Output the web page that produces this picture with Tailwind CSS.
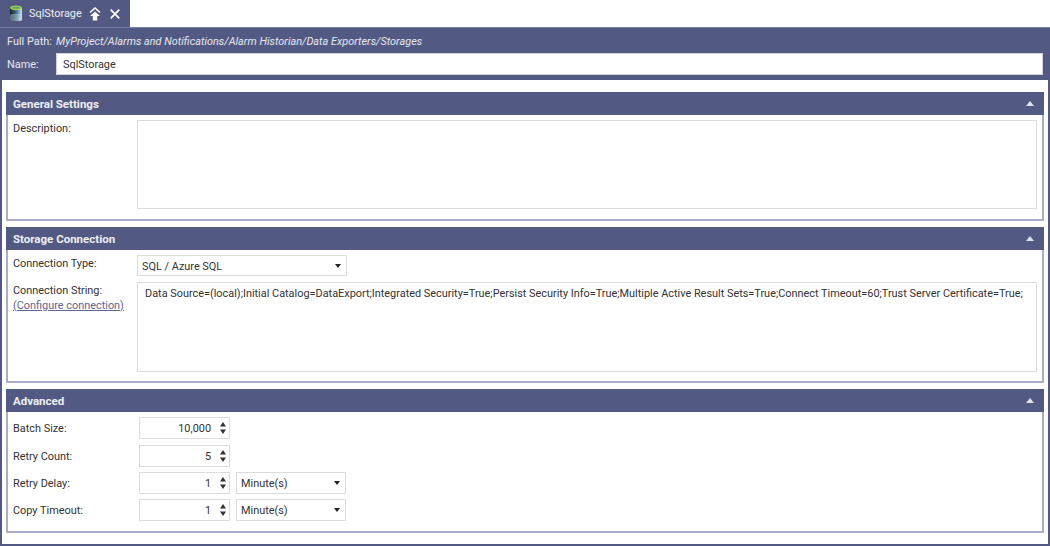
<!DOCTYPE html>
<html><head><script src="https://cdn.jsdelivr.net/npm/@tailwindcss/browser@4"></script></head>
<body class="bg-white">
<div class="w-[1050px] h-[546px] overflow-hidden flex flex-col bg-white font-['Roboto',sans-serif] text-[10.9px] leading-[16px] text-[#333]">
  <div class="h-[27px] shrink-0 flex">
    <div class="w-[130px] bg-[#525a84] flex items-center text-white">
      <svg class="ml-[9px] w-[14px] h-[17px]" viewBox="0 0 14 17"><defs><linearGradient id="c" x1="0" x2="1" y1="0" y2="0"><stop offset="0" stop-color="#16242e"/><stop offset=".5" stop-color="#3c6a84"/><stop offset="1" stop-color="#cfe2ee"/></linearGradient></defs><rect x="1" y="2" width="12" height="14" rx="2" fill="url(#c)"/><rect x="1" y="9" width="12" height="7" rx="2" fill="#e6eef4" opacity=".35"/><ellipse cx="7" cy="2.8" rx="6" ry="2.3" fill="#a9d23c"/><ellipse cx="7" cy="2.8" rx="3.8" ry="1" fill="#5f9a8a"/></svg>
      <span class="ml-[6px] w-[52px] text-[#eef0f6] whitespace-nowrap">SqlStorage</span>
      <svg class="ml-[8px] w-[12px] h-[14px]" viewBox="0 0 12 14"><path d="M1 5.5L6 1L11 5.5" fill="none" stroke="#fff" stroke-width="1.5"/><path d="M6 4.5L11 9H8.2V13.5H3.8V9H1Z" fill="#fff"/></svg>
      <svg class="ml-[9px] w-[10px] h-[10px]" viewBox="0 0 10 10"><path d="M.7 .7L9.3 9.3M9.3 .7L.7 9.3" stroke="#fff" stroke-width="1.7"/></svg>
    </div>
    <div class="flex-1"></div>
  </div>
  <div class="h-[53px] shrink-0 bg-[#525a84] border-t border-[#7a80a3] text-[#e6e8f0] pl-[7px] flex flex-col">
    <div class="h-[25px] flex items-end pb-[3px]"><span class="w-[49px]">Full Path:</span><span class="italic">MyProject/Alarms and Notifications/Alarm Historian/Data Exporters/Storages</span></div>
    <div class="flex items-center h-[22px]"><span class="w-[49px] pt-[2px]">Name:</span><div class="w-[987px] h-[22px] bg-white border border-[#d0d0d0] text-[#333] pl-[6px] pt-[2px] flex items-center">SqlStorage</div></div>
  </div>
  <div class="flex-1 border-l-2 border-r-2 border-b-2 border-[#525a84] pl-[4px] pr-[4px] pt-[12px] flex flex-col">
    <section class="h-[129px] border-x-2 border-b-2 border-[#a9adc6] flex flex-col">
      <div class="h-[23px] -mx-[2px] bg-[#525a84] flex items-center justify-between pl-[7px] pr-[10px] text-[#eef0f6] text-[11.5px] font-bold"><span>General Settings</span><svg class="w-[8px] h-[5px]" viewBox="0 0 8 5"><path d="M4 0L8 5H0Z" fill="#dfe2ee"/></svg></div>
      <div class="flex-1 flex pl-[5px] pr-[5px] pt-[5px] pb-[10px]"><span class="w-[124px] shrink-0 pt-[1px]">Description:</span><div class="flex-1 border border-[#dcdcdc]"></div></div>
    </section>
    <section class="mt-[6px] h-[156px] border-x-2 border-b-2 border-[#a9adc6] flex flex-col">
      <div class="h-[23px] -mx-[2px] bg-[#525a84] flex items-center justify-between pl-[7px] pr-[10px] text-[#eef0f6] text-[11.5px] font-bold"><span>Storage Connection</span><svg class="w-[8px] h-[5px]" viewBox="0 0 8 5"><path d="M4 0L8 5H0Z" fill="#dfe2ee"/></svg></div>
      <div class="flex-1 flex flex-col pl-[5px] pr-[5px] pt-[5px] pb-[9px] gap-[6px]">
        <div class="flex"><span class="w-[124px] shrink-0 pt-[1px]">Connection Type:</span><div class="w-[210px] h-[21px] border border-[#dcdcdc] flex items-center justify-between pl-[4px] pr-[5px]"><span class="pt-[2px]">SQL / Azure SQL</span><svg class="w-[6px] h-[4px]" viewBox="0 0 6 4"><path d="M0 0H6L3 4Z" fill="#222"/></svg></div></div>
        <div class="flex flex-1"><div class="w-[124px] shrink-0 flex flex-col pt-[1px]"><span>Connection String:</span><span class="text-[#5f6690] underline -mt-[1px]">(Configure connection)</span></div><div class="flex-1 border border-[#dcdcdc] pl-[7px] pt-[3px] whitespace-nowrap overflow-hidden">Data Source=(local);Initial Catalog=DataExport;Integrated Security=True;Persist Security Info=True;Multiple Active Result Sets=True;Connect Timeout=60;Trust Server Certificate=True;</div></div>
      </div>
    </section>
    <section class="mt-[6px] h-[144px] border-x-2 border-b-2 border-[#a9adc6] flex flex-col">
      <div class="h-[23px] -mx-[2px] bg-[#525a84] flex items-center justify-between pl-[7px] pr-[10px] text-[#eef0f6] text-[11.5px] font-bold"><span>Advanced</span><svg class="w-[8px] h-[5px]" viewBox="0 0 8 5"><path d="M4 0L8 5H0Z" fill="#dfe2ee"/></svg></div>
      <div class="flex flex-col pl-[5px] pt-[5px]">
        <div class="flex items-center h-[22px]"><span class="w-[126px] shrink-0 pt-[2px]">Batch Size:</span><div class="w-[91px] h-[22px] border border-[#dcdcdc] flex items-center justify-end pr-[3px] gap-[9px]"><span class="pt-[2px]">10,000</span><svg class="w-[6px] h-[12px]" viewBox="0 0 6 12"><path d="M3 0L6 4.5H0Z M0 7.5H6L3 12Z" fill="#333"/></svg></div></div>
        <div class="mt-[6px] flex items-center h-[22px]"><span class="w-[126px] shrink-0 pt-[2px]">Retry Count:</span><div class="w-[91px] h-[22px] border border-[#dcdcdc] flex items-center justify-end pr-[3px] gap-[9px]"><span class="pt-[2px]">5</span><svg class="w-[6px] h-[12px]" viewBox="0 0 6 12"><path d="M3 0L6 4.5H0Z M0 7.5H6L3 12Z" fill="#333"/></svg></div></div>
        <div class="mt-[5px] flex items-center h-[22px]"><span class="w-[126px] shrink-0 pt-[2px]">Retry Delay:</span><div class="w-[91px] h-[22px] border border-[#dcdcdc] flex items-center justify-end pr-[3px] gap-[9px]"><span class="pt-[2px]">1</span><svg class="w-[6px] h-[12px]" viewBox="0 0 6 12"><path d="M3 0L6 4.5H0Z M0 7.5H6L3 12Z" fill="#333"/></svg></div><div class="ml-[6px] w-[110px] h-[22px] border border-[#dcdcdc] flex items-center justify-between pl-[4px] pr-[5px]"><span class="pt-[2px]">Minute(s)</span><svg class="w-[6px] h-[4px]" viewBox="0 0 6 4"><path d="M0 0H6L3 4Z" fill="#222"/></svg></div></div>
        <div class="mt-[5px] flex items-center h-[22px]"><span class="w-[126px] shrink-0 pt-[2px]">Copy Timeout:</span><div class="w-[91px] h-[22px] border border-[#dcdcdc] flex items-center justify-end pr-[3px] gap-[9px]"><span class="pt-[2px]">1</span><svg class="w-[6px] h-[12px]" viewBox="0 0 6 12"><path d="M3 0L6 4.5H0Z M0 7.5H6L3 12Z" fill="#333"/></svg></div><div class="ml-[6px] w-[110px] h-[22px] border border-[#dcdcdc] flex items-center justify-between pl-[4px] pr-[5px]"><span class="pt-[2px]">Minute(s)</span><svg class="w-[6px] h-[4px]" viewBox="0 0 6 4"><path d="M0 0H6L3 4Z" fill="#222"/></svg></div></div>
      </div>
    </section>
  </div>
</div>
</body></html>
